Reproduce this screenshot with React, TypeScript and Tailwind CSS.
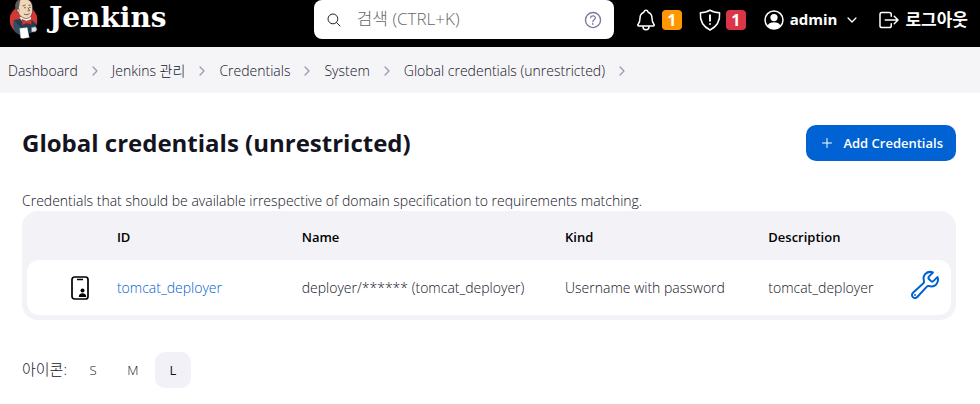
import {
  IoAdd,
  IoBuildOutline,
  IoChevronDownOutline,
  IoChevronForwardOutline,
  IoHelpCircleOutline,
  IoLogOutOutline,
  IoNotificationsOutline,
  IoSearchOutline,
} from "react-icons/io5";

const crumbs = ["Dashboard", "Jenkins 관리", "Credentials", "System", "Global credentials (unrestricted)"];

const credentials = [
  {
    id: "tomcat_deployer",
    name: "deployer/****** (tomcat_deployer)",
    kind: "Username with password",
    description: "tomcat_deployer",
  },
];

const iconSizes = ["S", "M", "L"];

function Butler() {
  return (
    <svg viewBox="8 0 31 39" className="h-[39px] w-[31px]" aria-hidden="true">
      <ellipse cx="23.500" cy="20" rx="13.800" ry="14" fill="#d33833" />
      <path d="M14 20l6-1 6 3 6-2 4 4 .5 5-5 4-12 2-4-3z" fill="#1f3c52" />
      <path d="M14 20c-1.500 4-.5 9 1 12l5 3V27z" fill="#335061" />
      <path d="M19.500 17l4 7 8-3-1-5z" fill="#f7f4f0" />
      <path d="M16 7C15 1 20-2 26-1c5 1 6.500 5 6.500 9 .5 6-1.500 10-6 10.500C21 18.500 17 13 16 7z" fill="#f0d6b7" stroke="#3a2e28" strokeWidth=".6" />
      <path d="M15.800 9.500C14 4 16.500-.5 21.500-1c-1.500 1.500-2 3-2 5.500l-.7 3 .7 3-1.500 2z" fill="#5d5a5a" />
      <path d="M19 9c-1.800-1-2.800.8-1.800 2.800l2.200 1" fill="#e3bd97" stroke="#3a2e28" strokeWidth=".5" />
      <path d="M22.500 6l3-1M28.500 5.200l2 0M28 7.500l1.600 3.200-2 .3M24 14c2 1 4 1 5.500-.5" fill="none" stroke="#3a2e28" strokeWidth=".7" />
      <circle cx="25" cy="7.700" r=".6" fill="#231f20" />
      <circle cx="30" cy="7.300" r=".6" fill="#231f20" />
      <path d="M22 19.500l4.500 1.700 5-1.700v5l-5-1.200-4.500 2z" fill="#d33833" stroke="#81201c" strokeWidth=".6" />
      <path d="M19.700 28.200l7.600-.6 2 10-7 1-1.800-.8z" fill="#fff" stroke="#8f959b" strokeWidth=".4" />
      <path d="M28 28.500l3.500 1v2.500l-3 .8z" fill="#1f3c52" />
      <path d="M31.500 27.500l4-.8 1.500 2.500-1.500 2.600-4 .2z" fill="#dfe3e6" stroke="#6d6b6d" strokeWidth=".5" />
    </svg>
  );
}

function ShieldAlert() {
  return (
    <svg viewBox="0 0 24 24" className="size-6" fill="none" stroke="currentColor" strokeWidth="1.5" strokeLinecap="round" strokeLinejoin="round" aria-hidden="true">
      <path d="M12 2.200C9.300 4.100 6 4.800 2.400 4.800 1.800 12.500 4.400 18.300 12 22c7.600-3.700 10.200-9.500 9.600-17.200C18 4.800 14.700 4.100 12 2.200z" />
      <path d="M12 7.200v5.600M12 16v.1" strokeWidth="1.900" />
    </svg>
  );
}

function PersonCircle() {
  return (
    <svg viewBox="0 0 24 24" className="size-6" aria-hidden="true">
      <circle cx="12" cy="12" r="9" fill="none" stroke="currentColor" strokeWidth="1.500" />
      <circle cx="12" cy="9.600" r="3.600" fill="currentColor" />
      <path d="M5.600 17.600c1-2.400 3.500-3.400 6.400-3.400s5.400 1 6.400 3.400A9 9 0 0 1 12 21a9 9 0 0 1-6.400-3.400z" fill="currentColor" />
    </svg>
  );
}

function IdCard() {
  return (
    <svg viewBox="0 0 18 24" className="h-6 w-[18px]" aria-hidden="true">
      <rect x="1" y="1" width="16" height="22" rx="2.500" fill="none" stroke="#000" strokeWidth="1.700" />
      <path d="M6 3.500h6" stroke="#000" strokeWidth="1.500" />
      <circle cx="11.500" cy="14.500" r="2" fill="#000" />
      <path d="M7.800 21c0-2.500 1.500-3.700 3.700-3.700s3.700 1.200 3.700 3.700z" fill="#000" />
    </svg>
  );
}

function Header() {
  return (
    <header className="flex h-[47px] items-start bg-black pr-3 text-white">
      <a href="#home" className="flex h-[39px] flex-1 items-center gap-2.5 pl-2">
        <Butler />
        <span className="pb-1 font-['DejaVu_Serif',serif] text-[28px] leading-8 font-bold">Jenkins</span>
      </a>
      <label className="flex h-[39px] w-[300px] items-center rounded-lg bg-white pr-2.5 pl-3">
        <IoSearchOutline className="size-4 shrink-0 text-[#222230]" />
        <input
          type="search"
          aria-label="검색"
          placeholder="검색 (CTRL+K)"
          className="ml-[15px] min-w-0 flex-1 text-[17px] font-light text-black outline-none placeholder:text-[#666666]"
        />
        <IoHelpCircleOutline className="size-[22px] shrink-0 text-[#7a7aa0]" />
      </label>
      <nav className="flex h-[39px] items-center pl-5 text-base font-bold">
        <button type="button" className="flex items-center gap-1" aria-label="알림">
          <IoNotificationsOutline className="size-6" />
          <span className="flex size-5 items-center justify-center rounded bg-[#ff9800]">1</span>
        </button>
        <button type="button" className="ml-4 flex items-center gap-1" aria-label="보안 경고">
          <ShieldAlert />
          <span className="flex size-5 items-center justify-center rounded bg-[#dc3545]">1</span>
        </button>
        <a href="#admin" className="ml-4 flex items-center gap-1 text-[15px]">
          <PersonCircle />
          admin
        </a>
        <button type="button" className="ml-2 p-0" aria-label="메뉴">
          <IoChevronDownOutline className="size-3.5" />
        </button>
        <a href="#logout" className="ml-[18px] flex items-center gap-1 text-[17px]">
          <IoLogOutOutline className="size-6" />
          로그아웃
        </a>
      </nav>
    </header>
  );
}

export default function App() {
  return (
    <div className="min-h-screen bg-white font-['Open_Sans','Noto_Sans_CJK_KR',sans-serif] text-sm font-light text-[#14141f]">
      <Header />

      <ol className="flex h-[46px] items-center bg-[#f5f5f8] px-2 pt-0.5">
        {crumbs.map((crumb) => (
          <li key={crumb} className="flex items-center">
            <a href="#crumb">{crumb}</a>
            <IoChevronForwardOutline className="mx-2.5 size-3.5 text-[#9b9bb0]" />
          </li>
        ))}
      </ol>

      <main className="px-6 pt-8 pl-[22px]">
        <div className="flex items-center justify-between">
          <h1 className="text-2xl font-bold text-[#14141f]">Global credentials (unrestricted)</h1>
          <button type="button" className="flex h-9 items-center gap-2 rounded-[10px] bg-[#0062d3] px-[13px] text-[13px] font-semibold text-white">
            <IoAdd className="size-4" />
            Add Credentials
          </button>
        </div>

        <p className="mt-[30px] leading-5">
          Credentials that should be available irrespective of domain specification to requirements matching.
        </p>

        <div className="rounded-2xl bg-[#f3f2f7] px-[5px] pb-[5px]">
          <table className="w-full table-fixed border-separate border-spacing-0 text-left">
            <thead>
              <tr className="h-[49px] text-[13px] text-black">
                <th className="w-[8%]" aria-label="Icon" />
                <th className="w-[20%] pt-1 pl-4 font-semibold">ID</th>
                <th className="w-[28.5%] pt-1 pl-4 font-semibold">Name</th>
                <th className="w-[22%] pt-1 pl-4 font-semibold">Kind</th>
                <th className="pt-1 pl-4 font-semibold">Description</th>
                <th className="w-14" aria-label="Actions" />
              </tr>
            </thead>
            <tbody>
              {credentials.map((c) => (
                <tr key={c.id} className="h-[55px] bg-white">
                  <td className="rounded-l-xl pr-3">
                    <div className="flex justify-end">
                      <IdCard />
                    </div>
                  </td>
                  <td className="pl-4">
                    <a href="#credential" className="text-[#0062d3]">{c.id}</a>
                  </td>
                  <td className="pl-4">{c.name}</td>
                  <td className="pl-4">{c.kind}</td>
                  <td className="pl-4">{c.description}</td>
                  <td className="rounded-r-xl pr-2.5 pb-1.5">
                    <a href="#update" aria-label="Update" className="flex justify-end text-[#0062d3]">
                      <IoBuildOutline className="size-8" />
                    </a>
                  </td>
                </tr>
              ))}
            </tbody>
          </table>
        </div>

        <div className="mt-8 flex items-center gap-1 text-[13px]">
          <span className="mr-1 text-[15px]">아이콘:</span>
          {iconSizes.map((size) => (
            <button
              key={size}
              type="button"
              className={size === "L" ? "size-9 rounded-[10px] bg-[#f2f1f7] font-medium" : "size-9 rounded-[10px]"}
            >
              {size}
            </button>
          ))}
        </div>
      </main>
    </div>
  );
}
